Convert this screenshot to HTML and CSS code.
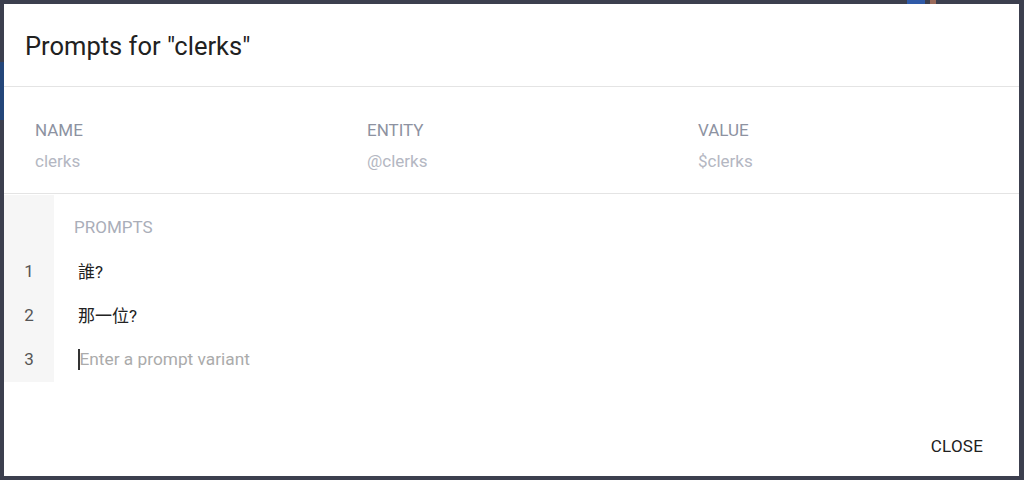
FILE: index.html
```html
<!DOCTYPE html>
<html lang="en">
<head>
<meta charset="utf-8">
<title>Prompts for "clerks"</title>
<link rel="stylesheet" href="styles.css">
</head>
<body>
<div class="modal">
  <header class="modal-head">
    <h1 class="modal-title">Prompts for "clerks"</h1>
  </header>
  <section class="info">
    <div class="info-col">
      <div class="info-label">Name</div>
      <div class="info-value">clerks</div>
    </div>
    <div class="info-col">
      <div class="info-label">Entity</div>
      <div class="info-value">@clerks</div>
    </div>
    <div class="info-col">
      <div class="info-label">Value</div>
      <div class="info-value">$clerks</div>
    </div>
  </section>
  <section class="prompts">
    <div class="gutter gutter-head"></div>
    <div class="prompts-label">Prompts</div>
    <div class="gutter">1</div>
    <div class="prompt">誰?</div>
    <div class="gutter">2</div>
    <div class="prompt">那一位?</div>
    <div class="gutter">3</div>
    <div class="prompt prompt-input"><span class="caret"></span><span class="placeholder">Enter a prompt variant</span></div>
  </section>
  <footer class="modal-foot">
    <button class="btn-close" type="button">Close</button>
  </footer>
</div>
</body>
</html>
```

FILE: styles.css
```css
html, body {
  margin: 0;
  height: 100%;
}
body {
  background-color: #3c3f4e;
  background-image:
    linear-gradient(#24467a, #24467a),
    linear-gradient(#2f5aa8, #2f5aa8),
    linear-gradient(#9a6a5a, #9a6a5a);
  background-repeat: no-repeat;
  background-size: 4px 58px, 18px 4px, 6px 4px;
  background-position: 0 62px, 907px 0, 930px 0;
  padding: 4px 5px 4px 4px;
  box-sizing: border-box;
  font-family: Roboto, "Noto Sans CJK TC", sans-serif;
  overflow: hidden;
}
.modal {
  background: #ffffff;
  height: 472px;
  display: flex;
  flex-direction: column;
}
.modal-head {
  height: 82px;
  border-bottom: 1px solid #e4e4e4;
  display: flex;
  align-items: center;
  padding-left: 21px;
}
.modal-title {
  margin: 0;
  font-size: 25.5px;
  font-weight: 400;
  color: #212121;
  line-height: 30px;
  padding-top: 1px;
}
.info {
  display: grid;
  grid-template-columns: 332px 331px 1fr;
  padding: 33px 0 0 31px;
  height: 73px;
  border-bottom: 1px solid #e4e4e4;
}
.info-label {
  font-size: 17px;
  line-height: 20px;
  color: #8d92a1;
  text-transform: uppercase;
}
.info-value {
  font-size: 17px;
  font-weight: 400;
  line-height: 20px;
  margin-top: 11px;
  color: #b4b7c2;
}
.prompts {
  display: grid;
  grid-template-columns: 50px 1fr;
  grid-template-rows: 55px 44px 44px 44px;
  margin-top: 1px;
}
.gutter {
  background: #f6f6f6;
  font-size: 17px;
  font-weight: 400;
  color: #555555;
  text-align: center;
  line-height: 20px;
  padding-top: 11px;
}
.gutter-head {
  padding: 0;
}
.prompts-label {
  padding: 22px 0 0 20px;
  font-size: 17px;
  font-weight: 400;
  line-height: 20px;
  color: #aaaeb9;
  text-transform: uppercase;
}
.prompt {
  padding: 12px 0 0 24px;
  font-size: 17px;
  line-height: 20px;
  color: #222222;
}
.prompt-input {
  display: flex;
  align-items: flex-start;
  padding-top: 11px;
}
.caret {
  display: inline-block;
  width: 1.5px;
  height: 21px;
  background: #333333;
}
.placeholder {
  color: #ababab;
  font-weight: 400;
  font-size: 17.3px;
}
.modal-foot {
  flex: 1;
  display: flex;
  justify-content: flex-end;
  align-items: flex-start;
  padding: 52px 30px 0 0;
}
.btn-close {
  border: 0;
  background: transparent;
  font-family: Roboto, sans-serif;
  font-size: 17px;
  font-weight: 400;
  color: #212121;
  text-transform: uppercase;
  letter-spacing: 0.2px;
  padding: 0 6px;
  line-height: 24px;
}
```
